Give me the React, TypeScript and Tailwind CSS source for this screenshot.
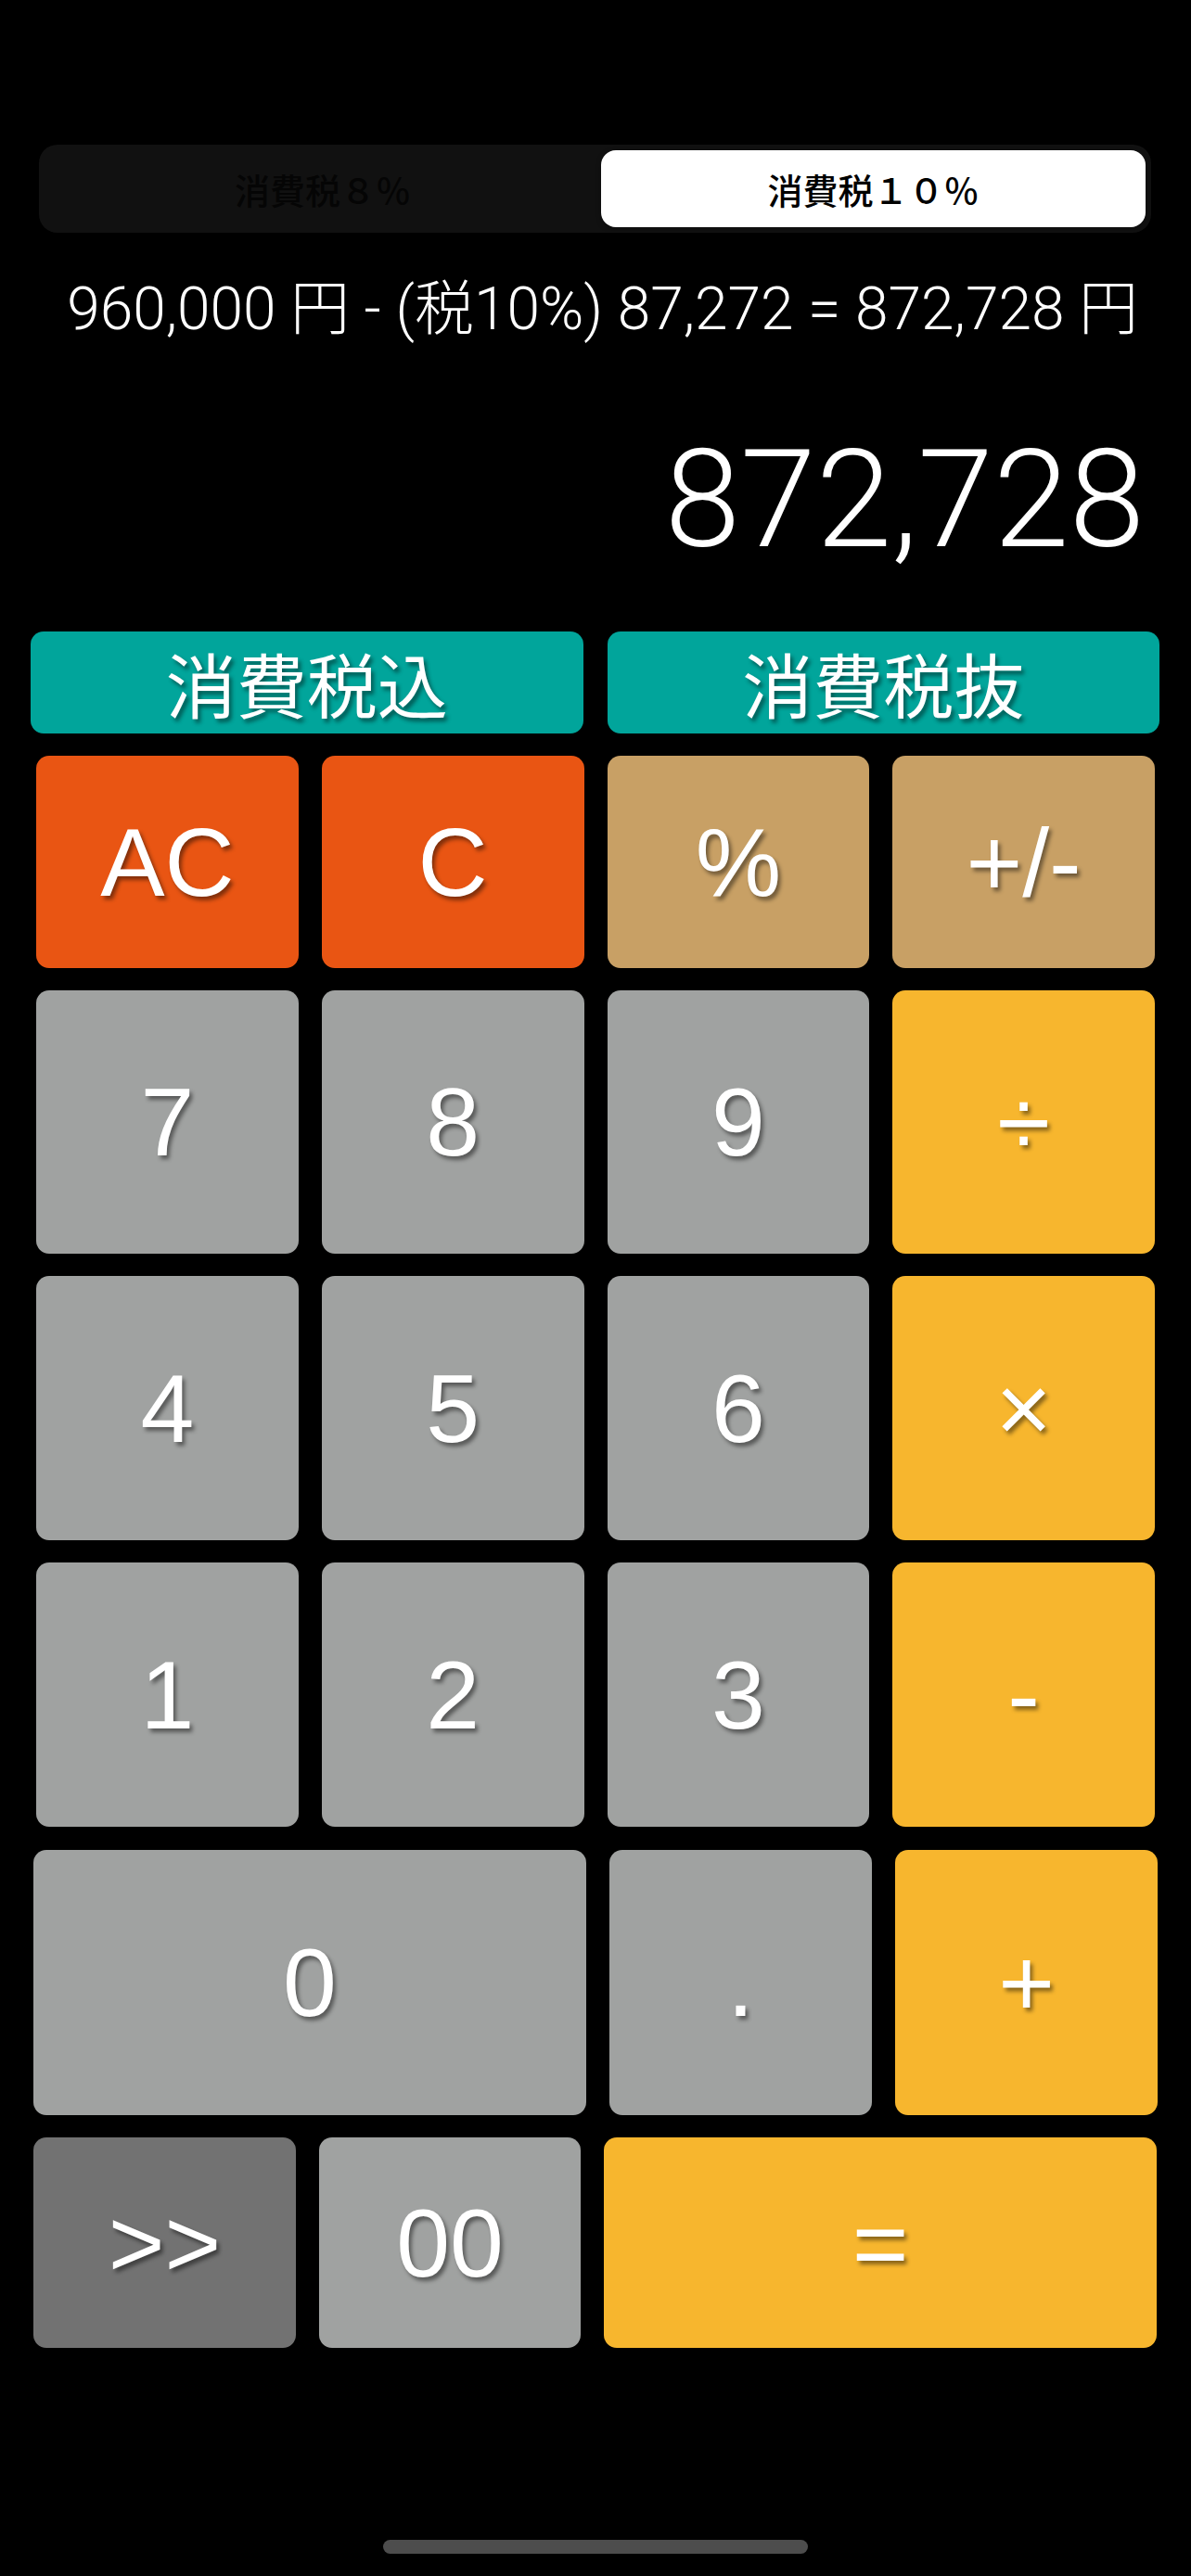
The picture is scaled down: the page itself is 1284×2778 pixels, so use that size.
import React from 'react';

type Key = { label: string; color: string };

const shadow = '[text-shadow:3px_4px_4px_rgba(0,0,0,0.45)]';

const rowsTop: { keys: Key[]; h: string }[] = [
  {
    h: 'h-[229px]',
    keys: [
      { label: 'AC', color: 'bg-[#e95513]' },
      { label: 'C', color: 'bg-[#e95513]' },
      { label: '%', color: 'bg-[#c8a065]' },
      { label: '+/-', color: 'bg-[#c8a065]' },
    ],
  },
  {
    h: 'h-[284px]',
    keys: [
      { label: '7', color: 'bg-[#a0a2a1]' },
      { label: '8', color: 'bg-[#a0a2a1]' },
      { label: '9', color: 'bg-[#a0a2a1]' },
      { label: '÷', color: 'bg-[#f7b62e]' },
    ],
  },
  {
    h: 'h-[285px]',
    keys: [
      { label: '4', color: 'bg-[#a0a2a1]' },
      { label: '5', color: 'bg-[#a0a2a1]' },
      { label: '6', color: 'bg-[#a0a2a1]' },
      { label: '×', color: 'bg-[#f7b62e]' },
    ],
  },
  {
    h: 'h-[285px]',
    keys: [
      { label: '1', color: 'bg-[#a0a2a1]' },
      { label: '2', color: 'bg-[#a0a2a1]' },
      { label: '3', color: 'bg-[#a0a2a1]' },
      { label: '-', color: 'bg-[#f7b62e]' },
    ],
  },
];

// bottom two rows have their own column widths (wide 0 / wide =)
const rowsBottom: { keys: Key[]; h: string; cols: string }[] = [
  {
    h: 'h-[286px]',
    cols: 'grid-cols-[596px_283px_283px]',
    keys: [
      { label: '0', color: 'bg-[#a0a2a1]' },
      { label: '.', color: 'bg-[#a0a2a1]' },
      { label: '+', color: 'bg-[#f7b62e]' },
    ],
  },
  {
    h: 'h-[227px]',
    cols: 'grid-cols-[283px_282px_596px]',
    keys: [
      { label: '>>', color: 'bg-[#727272]' },
      { label: '00', color: 'bg-[#a0a2a1]' },
      { label: '=', color: 'bg-[#f7b62e]' },
    ],
  },
];

function CalcKey({ k, h }: { k: Key; h: string }) {
  return (
    <button
      className={`${k.color} ${h} rounded-[14px] flex items-center justify-center text-white text-[104px] leading-none ${shadow}`}
      style={{ fontFamily: '"Liberation Sans", Arial, sans-serif' }}
    >
      {k.label}
    </button>
  );
}

export default function App() {
  return (
    <div className="min-h-screen bg-black flex flex-col" style={{ fontFamily: 'Roboto, "Noto Sans CJK JP", sans-serif' }}>
      {/* tax rate segmented control */}
      <div className="pt-[156px] pl-[42px] pr-[43px]">
        <div className="h-[95px] rounded-[20px] bg-[#111111] p-[6px] flex">
          <div
            className="w-[600px] flex items-center justify-center text-[38px] font-medium text-[#050505]"
            style={{ fontFamily: '"Noto Sans CJK JP", sans-serif' }}
          >
            消費税８％
          </div>
          <div
            className="flex-1 rounded-[16px] bg-white shadow-[0_2px_6px_rgba(0,0,0,0.3)] flex items-center justify-center text-[38px] font-medium text-black"
            style={{ fontFamily: '"Noto Sans CJK JP", sans-serif' }}
          >
            消費税１０％
          </div>
        </div>
      </div>

      {/* formula */}
      <div className="mt-[51px] pr-[57px] text-right text-white text-[64px] font-light leading-none whitespace-nowrap">
        960,000 円 - (税10%) 87,272 = 872,728 円
      </div>

      {/* result */}
      <div className="mt-[100px] pr-[50px] text-right text-white text-[147px] font-light leading-none">
        872,728
      </div>

      {/* tax buttons */}
      <div className="mt-[68px] pl-[33px] pr-[34px] grid grid-cols-2 gap-x-[26px]">
        {['消費税込', '消費税抜'].map((t) => (
          <button
            key={t}
            className={`h-[110px] rounded-[14px] bg-[#01a59b] flex items-center justify-center text-white text-[76px] leading-none ${shadow}`}
            style={{ fontFamily: '"Noto Sans CJK JP", sans-serif' }}
          >
            {t}
          </button>
        ))}
      </div>

      {/* keypad */}
      <div className="mt-[24px] px-[39px] flex flex-col gap-y-[24px]">
        {rowsTop.map((row, i) => (
          <div key={i} className="grid grid-cols-4 gap-x-[25px]">
            {row.keys.map((k) => (
              <CalcKey key={k.label} k={k} h={row.h} />
            ))}
          </div>
        ))}
      </div>
      <div className="mt-[25px] pl-[36px] flex flex-col gap-y-[24px]">
        {rowsBottom.map((row, i) => (
          <div key={i} className={`grid ${row.cols} gap-x-[25px]`}>
            {row.keys.map((k) => (
              <CalcKey key={k.label} k={k} h={row.h} />
            ))}
          </div>
        ))}
      </div>

      {/* home indicator */}
      <div className="mt-auto mb-[24px] mx-auto w-[458px] h-[15px] rounded-full bg-[#4d4d4d]" />
    </div>
  );
}
